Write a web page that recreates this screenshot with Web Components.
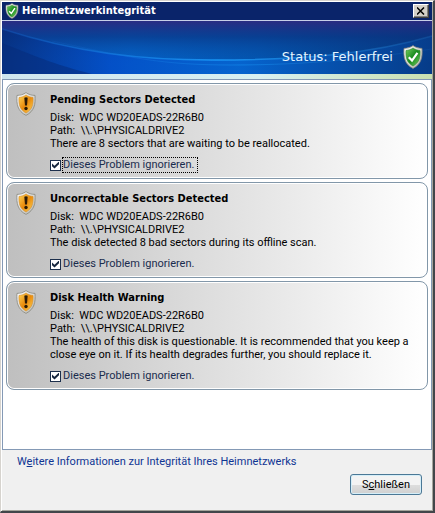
<!DOCTYPE html>
<html lang="de">
<head>
<meta charset="utf-8">
<title>Heimnetzwerkintegrität</title>
<style>
body {
    margin: 0;
    font-family: Roboto, sans-serif;
    font-size: 11px;
    line-height: 13px;
    color: #000;
}
</style>
</head>
<body>

<health-window heading="Heimnetzwerkintegrität">
    <status-banner slot="banner">Status: Fehlerfrei</status-banner>

    <problem-card heading="Pending Sectors Detected" marked>
        Disk:&nbsp; WDC WD20EADS-22R6B0<br>
        Path:&nbsp; \\.\PHYSICALDRIVE2<br>
        There are 8 sectors that are waiting to be reallocated.
    </problem-card>
    <problem-card heading="Uncorrectable Sectors Detected">
        Disk:&nbsp; WDC WD20EADS-22R6B0<br>
        Path:&nbsp; \\.\PHYSICALDRIVE2<br>
        The disk detected 8 bad sectors during its offline scan.
    </problem-card>
    <problem-card heading="Disk Health Warning">
        Disk:&nbsp; WDC WD20EADS-22R6B0<br>
        Path:&nbsp; \\.\PHYSICALDRIVE2<br>
        The health of this disk is questionable. It is recommended that you keep a close eye on it. If its health degrades further, you should replace it.
    </problem-card>

    <info-link slot="footer" href="#info">W<u>e</u>itere Informationen zur Integrität Ihres Heimnetzwerks</info-link>
    <dialog-button slot="footer">S<u>c</u>hließen</dialog-button>
</health-window>

<script>
//shield used in the title bar, the banner and the cards. kind is "ok" or "warning"
customElements.define('shield-icon',
    class extends HTMLElement {
        constructor() {
            super();
            this.shadow = this.attachShadow({ mode: 'open' });
            this.warning = this.getAttribute('kind') === "warning";
            this.light = this.warning ? "#ffd659" : "#79cf62";
            this.dark = this.warning ? "#e88a0c" : "#168a1d";
            this.shadow.innerHTML = `
            <style>
            :host { display: block; flex: none; width: 20px; height: 24px; }
            svg { display: block; width: 100%; height: 100%; }
            </style>
            <svg viewBox="0 0 20 24" aria-hidden="true">
                <defs>
                    <linearGradient id="rim" x1="0" y1="0" x2="1" y2="1">
                        <stop offset="0" stop-color="#fff"/>
                        <stop offset="1" stop-color="#b5b5ae"/>
                    </linearGradient>
                    <linearGradient id="fill" x1="0" y1="0" x2="1" y2="1">
                        <stop offset="0" stop-color="${this.light}"/>
                        <stop offset="0.5" stop-color="${this.dark}"/>
                        <stop offset="1" stop-color="${this.light}"/>
                    </linearGradient>
                </defs>
                <path d="M10 .6C7.6 2.4 4.400 3.400 1 3.400C.4 12 1.400 19 10 23.400C18.600 19 19.600 12 19 3.400C15.600 3.400 12.400 2.400 10 .6Z" fill="url(#rim)" stroke="#85857c" stroke-width=".8"/>
                <path d="M10 3C8 4.500 5.500 5.300 3 5.500C2.700 12.500 3.700 17.500 10 21C16.300 17.500 17.300 12.500 17 5.500C14.500 5.300 12 4.500 10 3Z" fill="url(#fill)" stroke="${this.warning ? "#d98a20" : "#2c8a2c"}" stroke-width=".6"/>
                ${this.warning
                    ? `<path d="M8.300 5.800Q10 4.800 11.700 5.800L11 13.600H9Z" fill="#2b1a05"/><circle cx="10" cy="16.500" r="1.700" fill="#2b1a05"/>`
                    : `<path d="M5.800 12.200L9 15.600L14.400 7.800" fill="none" stroke="#fff" stroke-width="2.200"/>`}
            </svg>
            `;
        }
    }
);

customElements.define('status-banner',
    class extends HTMLElement {
        constructor() {
            super();
            this.shadow = this.attachShadow({ mode: 'open' });
            this.shadow.innerHTML = `
            <style>
            :host {
                display: block;
                border-bottom: 5px solid #d5ecf0;
                border-image: linear-gradient(90deg, #cfe6ef, #d8f0f2 60%, #c9e0b0) 1;
            }
            .banner { display: grid; height: 53px; overflow: hidden; background: #0450ae; }
            .banner > * { grid-area: 1 / 1; }
            svg { width: 100%; height: 53px; }
            .status {
                display: flex;
                align-items: center;
                justify-content: flex-end;
                gap: 10px;
                padding: 18px 9px 0 0;
                color: #e4f6ff;
                font-family: "DejaVu Sans", sans-serif;
                font-size: 13px;
                line-height: 16px;
            }
            </style>
            <div class="banner">
                <svg viewBox="0 0 431 53" preserveAspectRatio="none" aria-hidden="true">
                    <defs>
                        <linearGradient id="across">
                            <stop offset="0" stop-color="#0a50b4"/>
                            <stop offset=".3" stop-color="#0561c6"/>
                            <stop offset=".6" stop-color="#0454ae"/>
                            <stop offset="1" stop-color="#06306f"/>
                        </linearGradient>
                        <linearGradient id="down" x2="0" y2="1">
                            <stop offset="0" stop-color="#2b2a80" stop-opacity=".95"/>
                            <stop offset=".3" stop-color="#0a3686" stop-opacity=".7"/>
                            <stop offset=".8" stop-color="#0454ae" stop-opacity="0"/>
                        </linearGradient>
                        <linearGradient id="below">
                            <stop offset="0" stop-color="#062b78"/>
                            <stop offset=".25" stop-color="#034bc8"/>
                            <stop offset=".55" stop-color="#0668d8"/>
                            <stop offset="1" stop-color="#063f90"/>
                        </linearGradient>
                        <linearGradient id="glow">
                            <stop offset="0" stop-color="#1467d2" stop-opacity=".3"/>
                            <stop offset=".5" stop-color="#1794f4"/>
                            <stop offset="1" stop-color="#2070c0" stop-opacity=".3"/>
                        </linearGradient>
                    </defs>
                    <rect width="431" height="53" fill="url(#across)"/>
                    <rect width="431" height="53" fill="url(#down)"/>
                    <path d="M0 8C75 32 140 39 210 39C300 39 370 33 431 15V53H0Z" fill="url(#below)" opacity=".75"/>
                    <path d="M0 22C40 38 55 44 90 53H0Z" fill="#052a78" opacity=".5"/>
                    <path d="M0 8C75 32 140 39 210 39C300 39 370 33 431 15" fill="none" stroke="url(#glow)" stroke-width="1.500"/>
                    <path d="M50 20C130 37 160 44 230 44C310 44 370 37 431 28" fill="none" stroke="url(#glow)" opacity=".5"/>
                </svg>
                <div class="status">
                    <slot></slot>
                    <shield-icon kind="ok"></shield-icon>
                </div>
            </div>
            `;
        }
    }
);

customElements.define('problem-card',
    class extends HTMLElement {
        constructor() {
            super();
            this.shadow = this.attachShadow({ mode: 'open' });
            this.shadow.innerHTML = `
            <style>
            :host {
                display: flex;
                gap: 14px;
                padding: 8px 15px 5px 9px;
                border: 1px solid #8297a9;
                border-radius: 8px;
                background: linear-gradient(90deg, #bfbfbf, #fff);
                box-shadow: inset 0 0 0 1px #fff;
            }
            .content { flex: 1; min-width: 0; }
            h2 {
                margin: 0 0 3px;
                font-family: "DejaVu Sans Condensed", "DejaVu Sans", sans-serif;
                font-size: 11px;
                line-height: 16px;
            }
            .option { display: flex; align-items: center; margin-top: 7px; color: #1a2c4e; }
            input {
                appearance: none;
                display: grid;
                place-items: center;
                width: 11px;
                height: 11px;
                margin: 0 1px 0 0;
                border: 1px solid #1c2f4c;
                box-sizing: border-box;
                background: #fff;
                outline: none;
            }
            input:checked::before {
                content: "";
                width: 7px;
                height: 7px;
                background: #16263e;
                clip-path: polygon(0 29%, 36% 62%, 100% 0, 100% 40%, 36% 100%, 0 68%);
            }
            label { border: 1px dotted transparent; line-height: 14px; padding-right: 3px; }
            :host([marked]) label { border-color: #000; }
            </style>
            <shield-icon kind="warning"></shield-icon>
            <div class="content">
                <h2>${this.getAttribute('heading')}</h2>
                <slot></slot>
                <div class="option">
                    <input type="checkbox" id="ignore" checked>
                    <label for="ignore">Dieses Problem ignorieren.</label>
                </div>
            </div>
            `;
        }
    }
);

customElements.define('info-link',
    class extends HTMLElement {
        constructor() {
            super();
            this.shadow = this.attachShadow({ mode: 'open' });
            this.shadow.innerHTML = `
            <style>
            :host { display: block; }
            a { color: #0f3593; text-decoration: none; }
            </style>
            <a href="${this.getAttribute('href')}"><slot></slot></a>
            `;
        }
    }
);

customElements.define('dialog-button',
    class extends HTMLElement {
        constructor() {
            super();
            this.shadow = this.attachShadow({ mode: 'open' });
            this.shadow.innerHTML = `
            <style>
            :host { display: block; align-self: flex-end; }
            button {
                display: block;
                min-width: 72px;
                height: 21px;
                padding: 0 8px;
                border: 1px solid #4b7896;
                border-radius: 3px;
                background: linear-gradient(#f3f3f3 50%, #dedede 50%, #d0d0d0);
                box-shadow: inset 0 0 0 1px #d5eef8;
                font: inherit;
                color: #000;
            }
            </style>
            <button type="button"><slot></slot></button>
            `;
        }
    }
);

customElements.define('health-window',
    class extends HTMLElement {
        constructor() {
            super();
            this.shadow = this.attachShadow({ mode: 'open' });
            this.shadow.innerHTML = `
            <style>
            :host {
                display: flex;
                flex-direction: column;
                box-sizing: border-box;
                min-height: 100vh;
                border: solid;
                border-width: 1px 2px 2px 1px;
                border-color: #d6d3ce #42464a #42464a #d6d3ce;
                background: #f0f0f0;
                box-shadow: inset 1px 1px #fff, inset -1px -1px #a5a59c;
                padding: 1px;
            }
            header {
                display: flex;
                align-items: center;
                gap: 3px;
                height: 18px;
                padding: 0 3px;
                border-bottom: 1px solid #c6cfe8;
                background: #0a246a;
                color: #fff;
            }
            header shield-icon { width: 14px; height: 16px; }
            h1 {
                flex: 1;
                margin: 0;
                font-family: "DejaVu Sans Condensed", "DejaVu Sans", sans-serif;
                font-size: 11px;
                line-height: 16px;
            }
            header button {
                display: grid;
                place-items: center;
                width: 16px;
                height: 14px;
                padding: 0;
                border: 1px solid;
                border-color: #fff #404040 #404040 #fff;
                background: #d4d0c8;
                box-shadow: inset -1px -1px #808080;
            }
            main {
                flex: 1;
                display: flex;
                flex-direction: column;
                gap: 3px;
                padding: 3px;
                border: 1px solid #8499b5;
                background: #fff;
            }
            footer {
                display: flex;
                flex-direction: column;
                gap: 6px;
                padding: 5px 10px 15px 15px;
            }
            </style>
            <header>
                <shield-icon kind="ok"></shield-icon>
                <h1>${this.getAttribute('heading')}</h1>
                <button type="button" aria-label="Schließen">
                    <svg width="8" height="8" viewBox="0 0 8 8" aria-hidden="true"><path d="M0 .5L7 7.500M7 .5L0 7.500" stroke="#000" stroke-width="1.500"/></svg>
                </button>
            </header>
            <slot name="banner"></slot>
            <main><slot></slot></main>
            <footer><slot name="footer"></slot></footer>
            `;
        }
    }
);
</script>
</body>
</html>
